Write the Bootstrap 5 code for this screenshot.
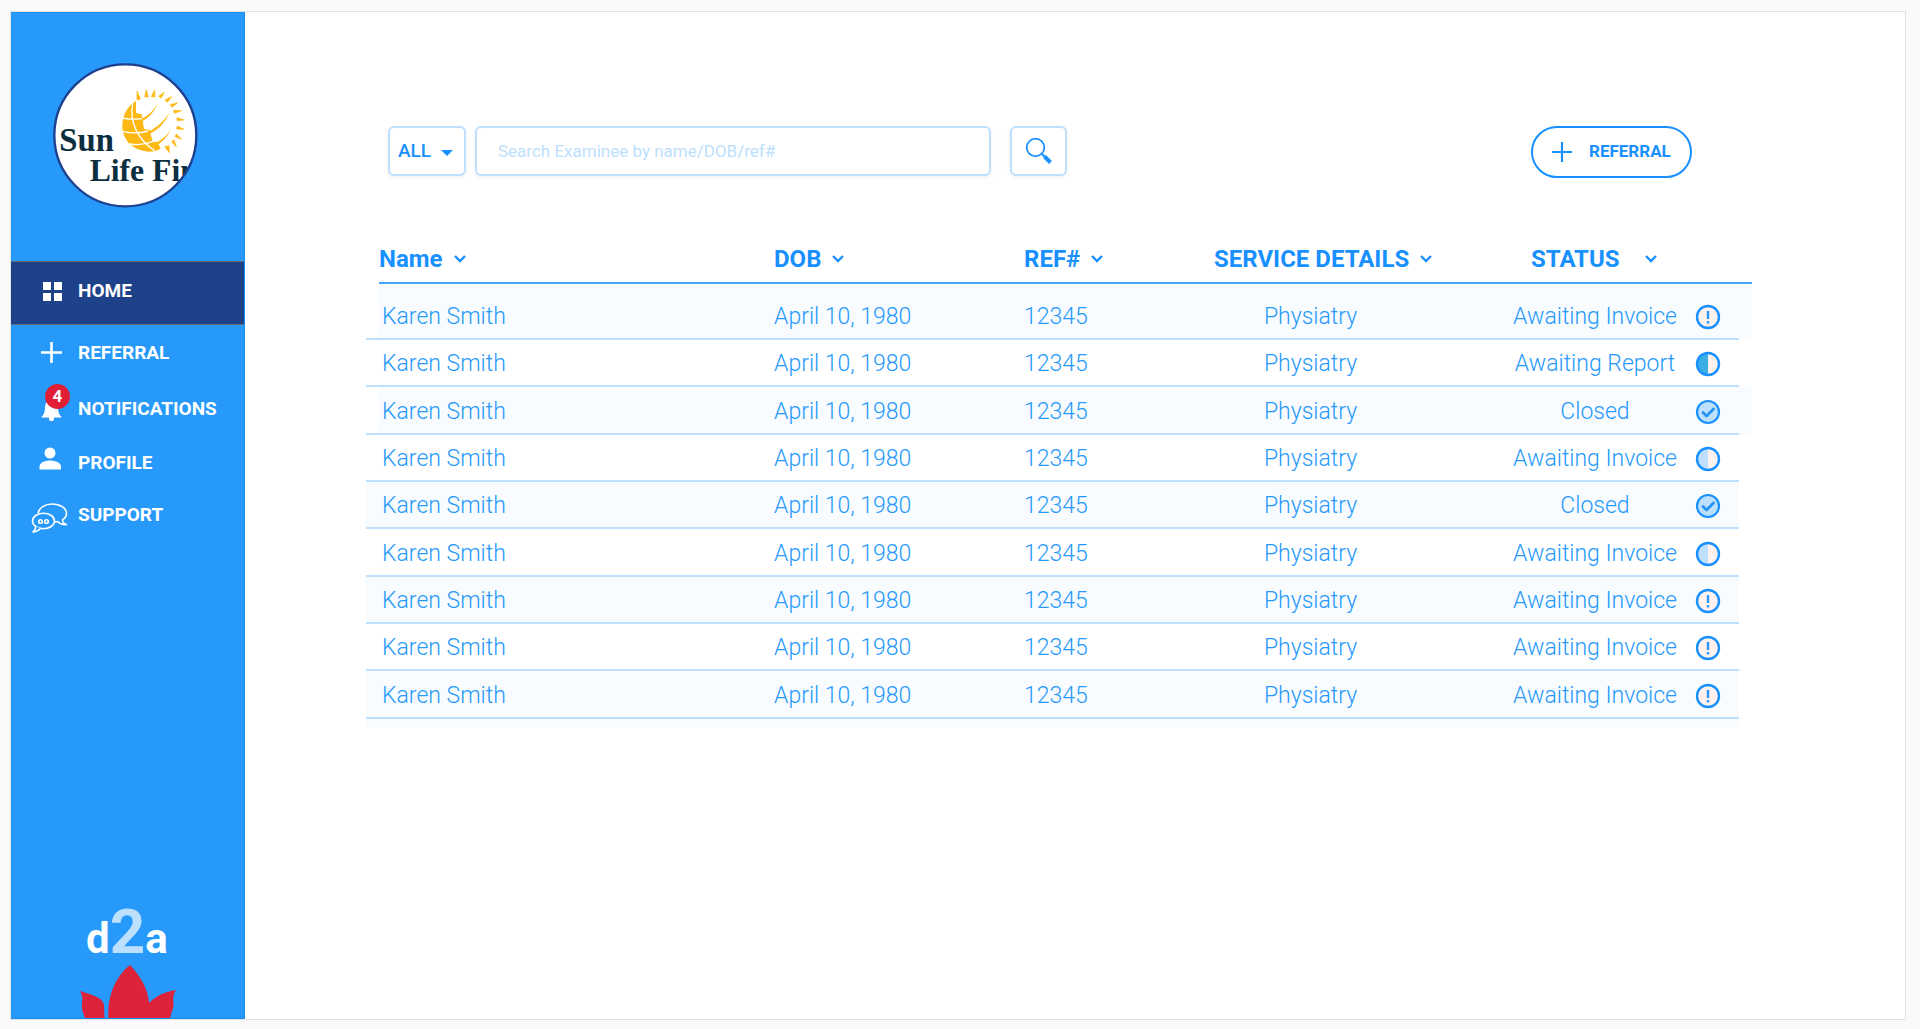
<!DOCTYPE html>
<html lang="en">
<head>
<meta charset="utf-8">
<meta name="viewport" content="width=device-width, initial-scale=1">
<title>d2a – Referrals</title>
<link rel="stylesheet" href="https://cdn.jsdelivr.net/npm/bootstrap@5.3.0/dist/css/bootstrap.min.css">
<style>
:root{--sky:#2699fb;--ink:#1890ff;--pale:#bce0fd;--navy:#1d4289;--tint:#f8fcff}
body{font-family:Roboto,"Liberation Sans",sans-serif;background:#fafafa;color:var(--sky);padding:11px 14px 9px 10px}
.shell{min-height:calc(100vh - 20px);background:#fff;border:1px solid #e2e2e2}
.side{width:234px;background:var(--sky);border:solid #1a90f5;border-width:1px 1px 1px 0;overflow:hidden}
.brand{margin:49px 0 53px 42px}
.side .nav-link{color:#fff;font-size:19px;line-height:24px;font-weight:700;padding:0;height:52px;position:relative}
.side .nav-link.tall{height:56px}
.side .nav-link.active{background:var(--navy);height:64px;padding-bottom:4px;border:1px solid #66686f;border-width:1px 0}
.bubble{position:absolute;left:34px;top:3px;width:25px;height:25px;border-radius:50%;background:#e01f37;font-size:17px;line-height:25px;text-align:center}
.wordmark{line-height:50px;font-weight:700;font-size:42px;color:#fff;padding-left:75px}
.wordmark span{font-size:62px;color:var(--pale)}
.lotus{margin-left:69px}
.content{padding:114px 153px 0 121px}
.tools{padding:0 60px 0 22px}
.field,.field:focus{height:50px;border:2px solid var(--pale);border-radius:6px;color:var(--ink);background-color:#fff;box-shadow:0 2px 4px #0000000f;outline:0}
.kind{position:relative;width:78px}
.kind select{appearance:none;width:100%;font-size:19px;font-weight:500;padding:0 0 0 8px}
.kind svg{position:absolute;right:13px;top:24px;pointer-events:none}
input.field{width:516px;font-size:17px;padding:0 21px;margin-left:9px}
input.field::placeholder{color:var(--pale);opacity:1}
button.field{width:57px;margin-left:19px}
.add{height:52px;width:161px;border:2px solid var(--ink);border-radius:26px;background:#fff;color:var(--ink);font-size:17px;font-weight:700;padding:0 0 0 18px}
.cases{margin-top:60px;color:var(--sky);table-layout:fixed;width:100%;font-size:23px;line-height:28px}
.cases th{font-size:24px;font-weight:700;color:var(--ink);height:46px;padding:0;white-space:nowrap;line-height:42px;vertical-align:top}
.cases th svg{margin:0 0 4px 10px}
.cases thead tr{background:linear-gradient(#45a5f8,#45a5f8) 13px 100%/calc(100% - 13px) 2px no-repeat}
.cases td{height:47px;padding:1px 0 0;white-space:nowrap;font-weight:300}
.cases td svg{display:block}
.cases tbody tr{--from:0px;--cut:13px;background:linear-gradient(var(--pale),var(--pale)) 0 100%/calc(100% - 13px) 2px no-repeat}
.cases tbody tr:nth-child(odd){background:linear-gradient(var(--pale),var(--pale)) 0 100%/calc(100% - 13px) 2px no-repeat,linear-gradient(var(--tint),var(--tint)) var(--from) 0/calc(100% - var(--cut)) 100% no-repeat}
.cases tbody tr:nth-child(1),.cases tbody tr:nth-child(3){--from:13px}
.cases tbody tr:nth-child(1) td{height:56px;padding-top:10px}
.cases tbody tr:nth-child(3n) td{height:48px}
.cases .who{padding-left:16px}
.cases th.who{padding-left:13px}
.cases td.service{padding-right:93px;text-align:center}
.cases td.state{text-align:center}
.cases th.state{padding-left:31px}
.cases th.state svg{margin-left:24px}
.cases td.mark-cell{padding-left:5px}
.w-dob{width:250px}.w-ref{width:190px}.w-service{width:286px}.w-state{width:190px}.w-mark{width:62px}
.tail{height:8px;margin-right:13px;background:var(--tint)}
</style>
<script src="https://cdn.jsdelivr.net/npm/bootstrap@5.3.0/dist/js/bootstrap.bundle.min.js"></script>
</head>
<body>
<svg class="d-none" aria-hidden="true">
<symbol id="chev" viewBox="0 0 14 10"><path d="M2 2l5 5 5-5" fill="none" stroke="#1890ff" stroke-width="2.4"/></symbol>
<symbol id="alert" viewBox="0 0 26 26"><circle cx="13" cy="13" r="11" fill="#fff1ee" stroke="#1890ff" stroke-width="2.4"/><path d="M13 7v8M13 17v2.4" stroke="#2699fb" stroke-width="2.4"/></symbol>
<symbol id="half" viewBox="0 0 26 26"><circle cx="13" cy="13" r="11" fill="#fff1ee"/><path d="M13 2a11 11 0 0 0 0 22z" fill="#bce0fd"/><circle cx="13" cy="13" r="11" fill="none" stroke="#1890ff" stroke-width="2.4"/></symbol>
<symbol id="report" viewBox="0 0 26 26"><circle cx="13" cy="13" r="11" fill="#fff1ee"/><path d="M13 2a11 11 0 0 0 0 22z" fill="#3baee3"/><circle cx="13" cy="13" r="11" fill="none" stroke="#1890ff" stroke-width="2.4"/></symbol>
<symbol id="done" viewBox="0 0 26 26"><circle cx="13" cy="13" r="11" fill="#bce0fd" stroke="#1890ff" stroke-width="2.2"/><path d="M8 13.500l3.500 3.500 7-7" fill="none" stroke="#2593f5" stroke-width="2.800" stroke-linecap="round" stroke-linejoin="round"/></symbol>
</svg>
<div class="shell d-flex">
<aside class="side d-flex flex-column flex-shrink-0">
<svg class="brand" width="145" height="146" viewBox="41 36 435 438" role="img" aria-label="Sun Life Financial">
<clipPath id="disc"><circle cx="258" cy="256" r="211"/></clipPath>
<circle cx="258" cy="256" r="213" fill="#fff"/>
<g clip-path="url(#disc)">
<g font-family="'Liberation Serif',serif" font-weight="700" fill="#0b2f3f"><text x="60" y="304" font-size="98">Sun</text><text x="151" y="392" font-size="95">Life Fin</text></g>
<path d="M290 153C262 168 244 205 250 243c8 36 38 60 78 62 14 0 26-3 36-9l-9-20-15-1-9-35-17-3-7-45-17-3z" fill="#fdb813"/>
<path d="M306 207q30-14 48-46-12 34-44 52zM318 248q44-16 72-60-18 46-66 67zM338 283q38-14 58-46-18 36-50 53z" fill="#fdb813"/>
<path d="M250 204q26 6 58 2M250 244q36 10 76-1M272 282q36 6 70-8M280 160q-8 44 12 84 18 34 54 58" fill="none" stroke="#fff" stroke-width="4"/>
<path fill="#fdb813" d="M293 123l10 24-10 3zM321 119l6 22-11-1zM346 120l1 21-11-1zM374 127l-8 17-8-5zM397 140l-13 17-7-7zM415 158l-17 14-5-8zM427 182l-22 8-2-9zM435 210l-22 2v-9zM434 238l-22-1 2-9zM427 268l-20-8 4-8zM411 291l-14-16 7-6zM390 308l-14-18 13-3z" stroke="#fdb813" stroke-width="2"/>
</g>
<circle cx="258" cy="256" r="213" fill="none" stroke="#1d3f8e" stroke-width="7"/>
</svg>
<nav class="nav flex-column" aria-label="Main">
<a class="nav-link active d-flex align-items-center" href="#" aria-current="page"><svg width="67" height="40" fill="#fff"><path d="M32 11h8v8h-8zM43 11h8v8h-8zM32 22h8v8h-8zM43 22h8v8h-8z"/></svg>HOME</a>
<a class="nav-link tall d-flex align-items-center" href="#"><svg width="67" height="40" stroke="#fff" stroke-width="2.600"><path d="M30 19.500h21M40.500 9v21"/></svg>REFERRAL</a>
<a class="nav-link tall d-flex align-items-center" href="#"><svg width="67" height="40" fill="#fff"><path d="M30 28.500c3-3 4-5 4-11a6.500 6.500 0 0 1 13 0c0 6 1 8 4 11zM38 28h5v2.500a2.500 1.500 0 0 1-5 0z"/></svg>NOTIFICATIONS<span class="bubble">4</span></a>
<a class="nav-link d-flex align-items-center" href="#"><svg width="67" height="40" fill="#fff"><circle cx="39" cy="10" r="5.500"/><path d="M28.500 26.500v-3c0-4 6-6 10.500-6s11 2 11 6v3z"/></svg>PROFILE</a>
<a class="nav-link d-flex align-items-center" href="#"><svg width="67" height="40" fill="none" stroke="#fff" stroke-width="1.600" stroke-linejoin="round"><path d="M27 18c1-5 7-9 14-9 8 0 14.500 4 14.500 9.500 0 3-2 5-4 6.500 0 2 2 4 4 4.500-4 .5-7-1-9-3l-3 .5"/><ellipse cx="32.500" cy="26" rx="11" ry="7.800" fill="#2699fb"/><path d="M25 31c0 2-1 4-3 6 4 0 6-2 7.500-3.500" fill="#2699fb"/><circle cx="29.500" cy="26.500" r="1.800"/><circle cx="35.500" cy="26.500" r="1.800"/></svg>SUPPORT</a>
</nav>
<div class="mt-auto">
<div class="wordmark">d<span>2</span>a</div>
<svg class="lotus d-block" width="98" height="54" viewBox="0 0 98 54" fill="#dc2339"><path d="M28.500 54C27 33 35 13 50 1c11 12 18 24 19 38 8-8 16-11 27-13-3 5-3 7-2.500 13 .5 4-2 9-3.500 15zM24.500 54H5C3 49 1 44 2 39c1-5 0-8-2-12 9 3 23 6 24 14z"/></svg>
</div>
</aside>
<main class="content flex-grow-1">
<form class="tools d-flex align-items-start" onsubmit="return false">
<div class="kind"><select class="field" aria-label="Filter"><option>ALL</option></select><svg width="12" height="6"><path d="M0 0h12L6 6z" fill="#1890ff"/></svg></div>
<input class="field" type="text" aria-label="Search" placeholder="Search Examinee by name/DOB/ref#">
<button class="field p-0" type="submit" aria-label="Search"><svg width="30" height="30" fill="none" stroke="#1890ff"><circle cx="11.500" cy="11.500" r="8.800" stroke-width="1.800"/><path d="M18 18l3 3" stroke-width="2"/><path d="M20.500 20.500l6 6" stroke-width="4"/></svg></button>
<button class="add ms-auto d-flex align-items-center" type="button"><svg class="me-2" width="22" height="24" stroke="#1890ff" stroke-width="2.200"><path d="M1 12h20M11 2v20"/></svg><span class="ps-2">REFERRAL</span></button>
</form>
<table class="cases">
<colgroup><col><col class="w-dob"><col class="w-ref"><col class="w-service"><col class="w-state"><col class="w-mark"></colgroup>
<thead><tr><th class="who">Name<svg width="14" height="10"><use href="#chev"/></svg></th><th>DOB<svg width="14" height="10"><use href="#chev"/></svg></th><th>REF#<svg width="14" height="10"><use href="#chev"/></svg></th><th>SERVICE DETAILS<svg width="14" height="10"><use href="#chev"/></svg></th><th class="state">STATUS<svg width="14" height="10"><use href="#chev"/></svg></th><th></th></tr></thead>
<tbody>
<tr><td class="who">Karen Smith</td><td>April 10, 1980</td><td>12345</td><td class="service">Physiatry</td><td class="state">Awaiting Invoice</td><td class="mark-cell"><svg width="26" height="26"><use href="#alert"/></svg></td></tr>
<tr><td class="who">Karen Smith</td><td>April 10, 1980</td><td>12345</td><td class="service">Physiatry</td><td class="state">Awaiting Report</td><td class="mark-cell"><svg width="26" height="26"><use href="#report"/></svg></td></tr>
<tr><td class="who">Karen Smith</td><td>April 10, 1980</td><td>12345</td><td class="service">Physiatry</td><td class="state">Closed</td><td class="mark-cell"><svg width="26" height="26"><use href="#done"/></svg></td></tr>
<tr><td class="who">Karen Smith</td><td>April 10, 1980</td><td>12345</td><td class="service">Physiatry</td><td class="state">Awaiting Invoice</td><td class="mark-cell"><svg width="26" height="26"><use href="#half"/></svg></td></tr>
<tr><td class="who">Karen Smith</td><td>April 10, 1980</td><td>12345</td><td class="service">Physiatry</td><td class="state">Closed</td><td class="mark-cell"><svg width="26" height="26"><use href="#done"/></svg></td></tr>
<tr><td class="who">Karen Smith</td><td>April 10, 1980</td><td>12345</td><td class="service">Physiatry</td><td class="state">Awaiting Invoice</td><td class="mark-cell"><svg width="26" height="26"><use href="#half"/></svg></td></tr>
<tr><td class="who">Karen Smith</td><td>April 10, 1980</td><td>12345</td><td class="service">Physiatry</td><td class="state">Awaiting Invoice</td><td class="mark-cell"><svg width="26" height="26"><use href="#alert"/></svg></td></tr>
<tr><td class="who">Karen Smith</td><td>April 10, 1980</td><td>12345</td><td class="service">Physiatry</td><td class="state">Awaiting Invoice</td><td class="mark-cell"><svg width="26" height="26"><use href="#alert"/></svg></td></tr>
<tr><td class="who">Karen Smith</td><td>April 10, 1980</td><td>12345</td><td class="service">Physiatry</td><td class="state">Awaiting Invoice</td><td class="mark-cell"><svg width="26" height="26"><use href="#alert"/></svg></td></tr>
</tbody>
</table>
<div class="tail"></div>
</main>
</div>
</body>
</html>
